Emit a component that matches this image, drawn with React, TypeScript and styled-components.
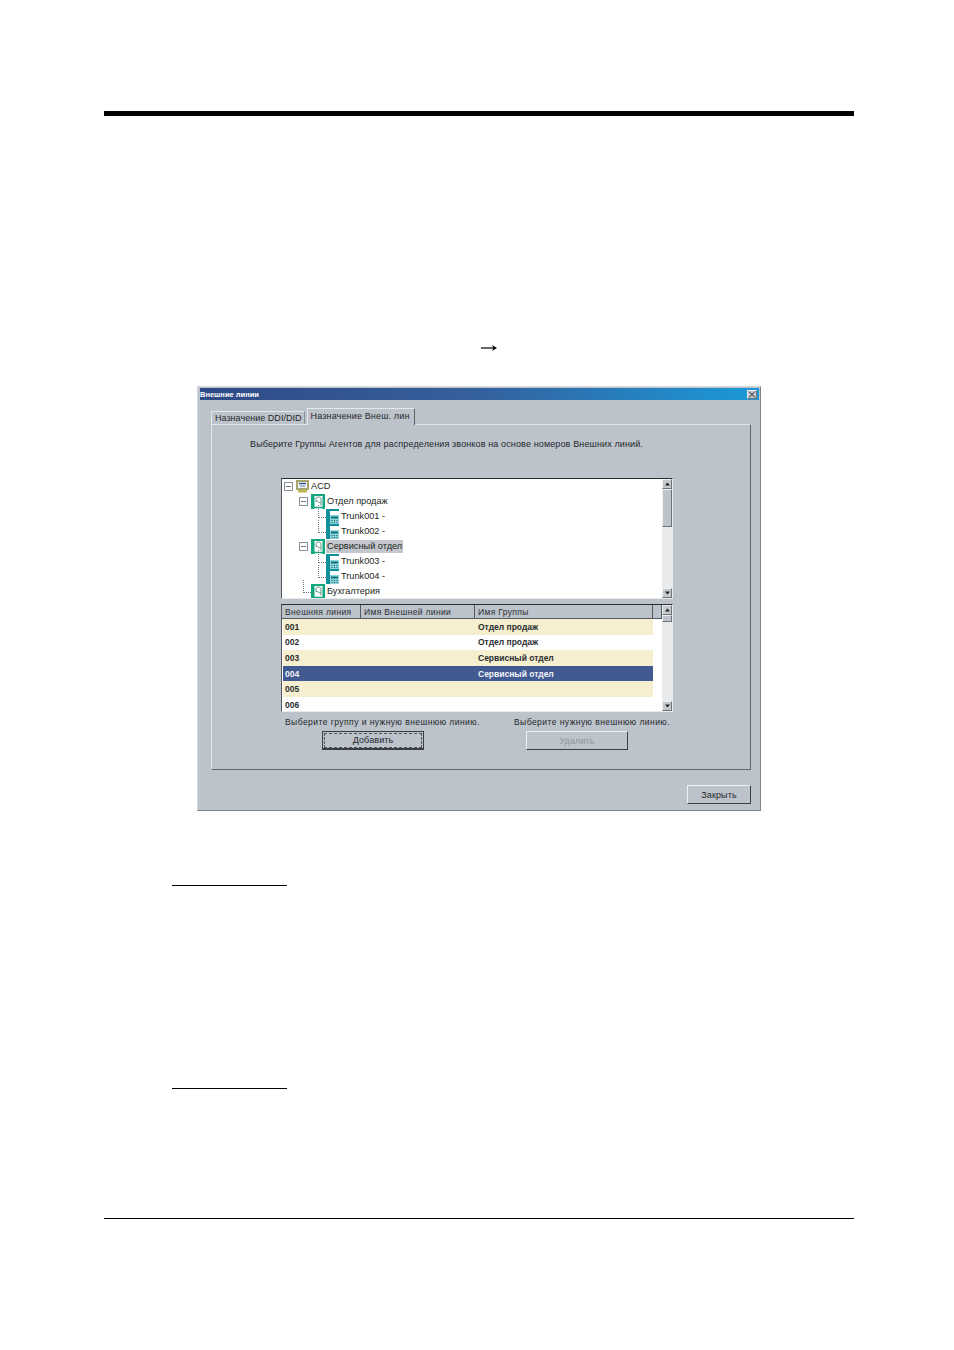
import React from "react";
import styled, { createGlobalStyle } from "styled-components";

const Global = createGlobalStyle`
  html, body { margin: 0; padding: 0; background: #fff; }
  * { box-sizing: border-box; }
`;

const Page = styled.div`
  width: 954px;
  height: 1350px;
  padding: 111px 100px 0 104px;
  display: flex;
  flex-direction: column;
  font-family: "Liberation Sans", Arial, sans-serif;
`;
const TopRule = styled.div`
  height: 5px;
  background: #000;
`;
const ArrowRow = styled.div`
  height: 12px;
  margin: 227px 0 0 376px;
  display: flex;
`;
const Win = styled.div`
  width: 564px;
  height: 425px;
  margin: 31px 0 0 93px;
  background: #bdc3ca;
  border: 1px solid #7d8389;
  border-top-color: #d8dce0;
  border-left-color: #d8dce0;
  padding: 1px 1px 0 2px;
  display: flex;
  flex-direction: column;
  font-size: 9px;
  letter-spacing: 0.13px;
  color: #24282c;
`;
const TitleBar = styled.div`
  height: 12px;
  flex: none;
  background: linear-gradient(90deg, #2f4a86 0%, #35609e 50%, #1b9ad8 100%);
  color: #fff;
  font-size: 7.5px;
  font-weight: 700;
  letter-spacing: 0;
  padding: 0 2px 0 0;
  display: flex;
  align-items: center;
  justify-content: space-between;
`;
const CloseBox = styled.div`
  width: 10px;
  height: 9px;
  background: #c4c9ce;
  border: 1px solid #6e7378;
  border-top-color: #eee;
  border-left-color: #eee;
  display: flex;
`;
const Tabs = styled.div`
  height: 24px;
  flex: none;
  padding: 5px 0 0 11px;
  display: flex;
  align-items: flex-end;
`;
const Tab = styled.div<{ $active?: boolean }>`
  height: ${(p) => (p.$active ? 17 : 13)}px;
  padding: ${(p) => (p.$active ? "0 4px 3px 3px" : "0 2px 0 3px")};
  margin-left: ${(p) => (p.$active ? 2 : 0)}px;
  background: #bdc3ca;
  border: 1px solid #e6e9ec;
  border-bottom: none;
  border-right: 1px solid ${(p) => (p.$active ? "#5f6468" : "#8b9096")};
  letter-spacing: ${(p) => (p.$active ? 0.15 : 0.03)}px;
  display: flex;
  align-items: center;
  white-space: nowrap;
  position: relative;
  margin-bottom: ${(p) => (p.$active ? -1 : 0)}px;
  z-index: ${(p) => (p.$active ? 1 : 0)};
`;
const Panel = styled.div`
  width: 540px;
  height: 346px;
  margin-left: 11px;
  border: 1px solid #e4e7ea;
  border-right-color: #62676c;
  border-bottom-color: #62676c;
  padding: 13px 0 0 38px;
  display: flex;
  flex-direction: column;
`;
const Hint = styled.div`
  height: 12px;
  line-height: 12px;
  white-space: nowrap;
`;
const ListBlock = styled.div`
  width: 392px;
  margin: 28px 0 0 31px;
  display: flex;
  flex-direction: column;
`;
const Sunken = styled.div<{ $h: number; $gap?: number }>`
  height: ${(p) => p.$h}px;
  margin-top: ${(p) => p.$gap ?? 0}px;
  background: #fff;
  border: 1px solid #e8ebed;
  border-top: 1px solid #2b2e31;
  border-left: 1px solid #55595d;
  display: flex;
  overflow: hidden;
`;
const Tree = styled.div`
  flex: 1;
  padding: 0 0 0 2px;
  color: #1c1f22;
  font-size: 9.2px;
  letter-spacing: 0;
`;
const TreeRow = styled.div<{ $depth: number }>`
  height: 15px;
  padding-left: ${(p) => p.$depth * 15}px;
  display: flex;
  align-items: center;
  white-space: nowrap;
`;
const Expander = styled.span<{ $branch?: boolean }>`
  width: 9px;
  height: 9px;
  flex: none;
  border: 1px solid ${(p) => (p.$branch ? "transparent" : "#8b9096")};
  margin-right: 3px;
  position: relative;
  &::after {
    content: "";
    position: absolute;
    ${(p) =>
      p.$branch
        ? `left: 3px; width: 9px; top: -8px; height: 12px;
           border-left: 1px dotted #777; border-bottom: 1px dotted #777;`
        : `left: 1px; right: 1px; top: 3px; height: 1px; background: #777;`}
  }
`;
const Label = styled.span<{ $selected?: boolean }>`
  margin-left: 1px;
  padding: 0 1px;
  line-height: 13px;
  background: ${(p) => (p.$selected ? "#c4c8cc" : "transparent")};
`;
const ScrollBar = styled.div`
  width: 10px;
  flex: none;
  display: flex;
  flex-direction: column;
  background: radial-gradient(#b6bbc0 0.6px, #e8eaec 0.7px) 0 0 / 2px 2px;
`;
const ScrollBtn = styled.div`
  height: 10px;
  flex: none;
  background: #c4c9ce;
  border: 1px solid #6e7378;
  border-top-color: #eef0f2;
  border-left-color: #eef0f2;
  display: flex;
  align-items: center;
  justify-content: center;
`;
const Thumb = styled.div<{ $h: number }>`
  height: ${(p) => p.$h}px;
  flex: none;
  background: #bdc3ca;
  border: 1px solid #6e7378;
  border-top-color: #eef0f2;
  border-left-color: #eef0f2;
`;
const Spring = styled.div`
  flex: 1;
`;
const TableArea = styled.div`
  flex: 1;
  display: flex;
  flex-direction: column;
  padding-left: 1px;
`;
const HeaderRow = styled.div`
  height: 14px;
  flex: none;
  margin-left: -1px;
  background: #bdc3ca;
  border-bottom: 1px solid #55595d;
  display: grid;
  grid-template-columns: 79px 114px 178px 9px;
  color: #2c3035;
  font-size: 8.5px;
  letter-spacing: 0.35px;
`;
const HeaderCell = styled.div`
  padding-left: 3px;
  line-height: 14px;
  border-right: 1px solid #55595d;
  white-space: nowrap;
`;
const DataRow = styled.div<{ $tone: "cream" | "white" | "sel" }>`
  height: 15.6px;
  flex: none;
  width: 370px;
  display: grid;
  grid-template-columns: 193px 1fr;
  align-items: center;
  font-weight: 700;
  font-size: 8.5px;
  letter-spacing: 0;
  background: ${(p) =>
    p.$tone === "cream" ? "#f5efcf" : p.$tone === "sel" ? "#425a92" : "#fff"};
  color: ${(p) => (p.$tone === "sel" ? "#f2f4f8" : "#2a2d30")};
`;
const Cell = styled.div`
  padding-left: 2px;
  white-space: nowrap;
`;
const Actions = styled.div`
  margin-top: 5px;
  display: grid;
  grid-template-columns: 229px 1fr;
  font-size: 8.5px;
  letter-spacing: 0.45px;
`;
const ActionCol = styled.div`
  display: flex;
  flex-direction: column;
  align-items: flex-start;
  padding-left: 4px;
`;
const ActionHint = styled.div`
  height: 11px;
  line-height: 11px;
  white-space: nowrap;
`;
const Btn = styled.div<{ $inset?: number; $disabled?: boolean; $focus?: boolean }>`
  width: 102px;
  height: 19px;
  margin: 3px 0 0 ${(p) => p.$inset ?? 0}px;
  background: #bdc3ca;
  border: 1px solid ${(p) => (p.$focus ? "#3a3e42" : "#eef0f2")};
  border-right-color: #3a3e42;
  border-bottom-color: #3a3e42;
  border-bottom-width: ${(p) => (p.$focus ? 2 : 1)}px;
  color: ${(p) => (p.$disabled ? "#8f959b" : "#24282c")};
  font-size: 9px;
  letter-spacing: 0.1px;
  display: flex;
  align-items: center;
  justify-content: center;
  outline: ${(p) => (p.$focus ? "1px dashed #555" : "none")};
  outline-offset: -3px;
`;
const Footer = styled.div`
  display: flex;
  justify-content: flex-end;
  padding: 15px 8px 0 0;
`;
const CloseBtn = styled(Btn)`
  width: 64px;
  margin: 0;
`;
const SectionRule = styled.div<{ $gap: number }>`
  width: 115px;
  height: 1px;
  margin: ${(p) => p.$gap}px 0 0 68px;
  background: #000;
`;
const BottomRule = styled.div`
  height: 1px;
  margin-top: 129px;
  background: #000;
`;

const Tri = ({ up }: { up?: boolean }) => (
  <svg width="5" height="4" viewBox="0 0 5 4">
    <path d={up ? "M2.5 0.5 L5 3.5 L0 3.5 Z" : "M0 0.5 L5 0.5 L2.5 3.5 Z"} fill="#222" />
  </svg>
);

const RootIcon = () => (
  <svg width="13" height="13" viewBox="0 0 13 13">
    <rect x="0" y="0" width="13" height="10" fill="#a8a56c" />
    <rect x="2" y="2" width="9" height="6" fill="#eef1f6" />
    <path d="M3 3.5h7" stroke="#2f4f95" strokeWidth="1.4" />
    <path d="M4 6h5" stroke="#6c7fa8" />
    <rect x="2" y="10" width="9" height="2.5" fill="#c4b54e" />
  </svg>
);

const GroupIcon = () => (
  <svg width="14" height="15" viewBox="0 0 14 15">
    <rect x="0" y="0" width="14" height="15" fill="#fff" />
    <path d="M0 0h3.5v15H0zM11.5 0h2.5v15h-2.5zM0 0h14v2H0z" fill="#12a67e" />
    <path d="M5 4.5c0-2 5-2 5 0v3c0 1.5-3 1.5-3 0M5 4.5v3h1.5M10 8v3.5" stroke="#5d8f80" fill="none" />
    <path d="M3 13.5h9" stroke="#12a67e" strokeWidth="1.5" />
  </svg>
);

const TrunkIcon = () => (
  <svg width="13" height="15" viewBox="0 0 13 15">
    <path d="M0 0h4v15H0z" fill="#0f8f9c" />
    <path d="M4 0h9v2H4z" fill="#0f8f9c" />
    <path d="M4 6h9v9H4z" fill="#8fd6dc" />
    <path d="M5 7.5h7v2H5z" fill="#0c6f7a" />
    <path d="M5.5 11.5h1M8 11.5h1M10.5 11.5h1M5.5 13.5h1M8 13.5h1M10.5 13.5h1" stroke="#0c5660" />
  </svg>
);

const treeRows = [
  { depth: 0, icon: <RootIcon />, text: "ACD", expander: true },
  { depth: 1, icon: <GroupIcon />, text: "Отдел продаж", expander: true },
  { depth: 2, icon: <TrunkIcon />, text: "Trunk001 -" },
  { depth: 2, icon: <TrunkIcon />, text: "Trunk002 -" },
  { depth: 1, icon: <GroupIcon />, text: "Сервисный отдел", expander: true, selected: true },
  { depth: 2, icon: <TrunkIcon />, text: "Trunk003 -" },
  { depth: 2, icon: <TrunkIcon />, text: "Trunk004 -" },
  { depth: 1, icon: <GroupIcon />, text: "Бухгалтерия" },
];

const tableRows: { id: string; group: string; tone: "cream" | "white" | "sel" }[] = [
  { id: "001", group: "Отдел продаж", tone: "cream" },
  { id: "002", group: "Отдел продаж", tone: "white" },
  { id: "003", group: "Сервисный отдел", tone: "cream" },
  { id: "004", group: "Сервисный отдел", tone: "sel" },
  { id: "005", group: "", tone: "cream" },
  { id: "006", group: "", tone: "white" },
];

export default function App() {
  return (
    <Page>
      <Global />
      <TopRule />
      <ArrowRow>
        <svg width="18" height="10" viewBox="0 0 18 10">
          <path d="M1 5h14" stroke="#000" strokeWidth="1.2" />
          <path d="M12 2 L17 5 L12 8 L13.5 5 Z" fill="#000" />
        </svg>
      </ArrowRow>
      <Win>
        <TitleBar>
          <span>Внешние линии</span>
          <CloseBox>
            <svg width="8" height="7" viewBox="0 0 8 7">
              <path d="M1 0.5 L7 6.5 M7 0.5 L1 6.5" stroke="#222" />
            </svg>
          </CloseBox>
        </TitleBar>
        <Tabs>
          <Tab>Назначение DDI/DID</Tab>
          <Tab $active>Назначение Внеш. лин</Tab>
        </Tabs>
        <Panel>
          <Hint>Выберите Группы Агентов для распределения звонков на основе номеров Внешних линий.</Hint>
          <ListBlock>
            <Sunken $h={121}>
              <Tree>
                {treeRows.map((r) => (
                  <TreeRow key={r.text} $depth={r.depth}>
                    <Expander $branch={!r.expander} />
                    {r.icon}
                    <Label $selected={r.selected}>{r.text}</Label>
                  </TreeRow>
                ))}
              </Tree>
              <ScrollBar>
                <ScrollBtn><Tri up /></ScrollBtn>
                <Thumb $h={38} />
                <Spring />
                <ScrollBtn><Tri /></ScrollBtn>
              </ScrollBar>
            </Sunken>
            <Sunken $h={108} $gap={5}>
              <TableArea>
                <HeaderRow>
                  <HeaderCell>Внешняя линия</HeaderCell>
                  <HeaderCell>Имя Внешней линии</HeaderCell>
                  <HeaderCell>Имя Группы</HeaderCell>
                  <HeaderCell />
                </HeaderRow>
                {tableRows.map((r) => (
                  <DataRow key={r.id} $tone={r.tone}>
                    <Cell>{r.id}</Cell>
                    <Cell>{r.group}</Cell>
                  </DataRow>
                ))}
              </TableArea>
              <ScrollBar>
                <ScrollBtn><Tri up /></ScrollBtn>
                <Thumb $h={7} />
                <Spring />
                <ScrollBtn><Tri /></ScrollBtn>
              </ScrollBar>
            </Sunken>
            <Actions>
              <ActionCol>
                <ActionHint>Выберите группу и нужную внешнюю линию.</ActionHint>
                <Btn $inset={37} $focus>Добавить</Btn>
              </ActionCol>
              <ActionCol>
                <ActionHint>Выберите нужную внешнюю линию.</ActionHint>
                <Btn $inset={12} $disabled>Удалить</Btn>
              </ActionCol>
            </Actions>
          </ListBlock>
        </Panel>
        <Footer>
          <CloseBtn>Закрыть</CloseBtn>
        </Footer>
      </Win>
      <SectionRule $gap={74} />
      <SectionRule $gap={202} />
      <BottomRule />
    </Page>
  );
}
